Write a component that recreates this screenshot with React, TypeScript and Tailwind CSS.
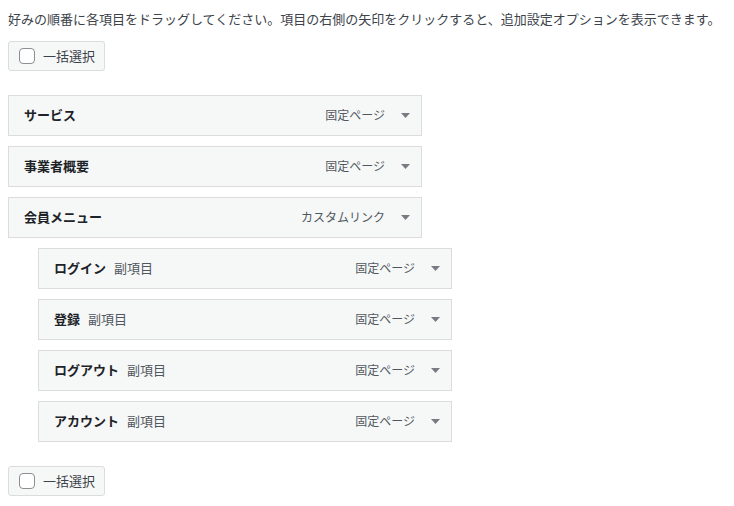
const font = "font-['Noto_Sans_CJK_JP','Noto_Sans',sans-serif]";

type MenuItem = {
  title: string;
  type: string;
  depth: 0 | 1;
};

const items: MenuItem[] = [
  { title: "サービス", type: "固定ページ", depth: 0 },
  { title: "事業者概要", type: "固定ページ", depth: 0 },
  { title: "会員メニュー", type: "カスタムリンク", depth: 0 },
  { title: "ログイン", type: "固定ページ", depth: 1 },
  { title: "登録", type: "固定ページ", depth: 1 },
  { title: "ログアウト", type: "固定ページ", depth: 1 },
  { title: "アカウント", type: "固定ページ", depth: 1 },
];

function BulkSelect() {
  return (
    <label className="flex h-[30px] w-[97px] items-center gap-2 rounded-[3px] border border-[#dcdcde] bg-[#f6f7f7] pl-[10px] text-[13px] text-[#3c434a]">
      <span className="block h-4 w-4 rounded-[4px] border border-[#8c8f94] bg-white" />
      一括選択
    </label>
  );
}

function Arrow() {
  return (
    <svg width="9" height="5" viewBox="0 0 9 5" className="block">
      <polygon points="0,0 9,0 4.5,5" fill="#787c82" />
    </svg>
  );
}

export default function App() {
  return (
    <div className={`${font} min-h-[506px] bg-white px-2`}>
      <p className="pt-[9px] text-[13px] leading-[19.5px] text-[#3c434a]">
        好みの順番に各項目をドラッグしてください。項目の右側の矢印をクリックすると、追加設定オプションを表示できます。
      </p>
      <div className="mt-[12px]">
        <BulkSelect />
      </div>
      <ul className="mt-[24px] flex flex-col gap-[10px]">
        {items.map((item) => (
          <li
            key={item.title}
            className={item.depth === 1 ? "pl-[30px]" : ""}
          >
            <div className="flex h-[41px] w-[414px] items-center justify-between border border-[#dcdcde] bg-[#f6f7f7] pl-[15px] pr-[11px] text-[13px]">
              <span className="flex items-center gap-2">
                <span className="font-bold text-[#1d2327]">{item.title}</span>
                {item.depth === 1 && (
                  <span className="text-[#50575e]">副項目</span>
                )}
              </span>
              <span className="flex items-center gap-4 text-[12px] text-[#50575e]">
                {item.type}
                <Arrow />
              </span>
            </div>
          </li>
        ))}
      </ul>
      <div className="mt-[24px]">
        <BulkSelect />
      </div>
    </div>
  );
}
